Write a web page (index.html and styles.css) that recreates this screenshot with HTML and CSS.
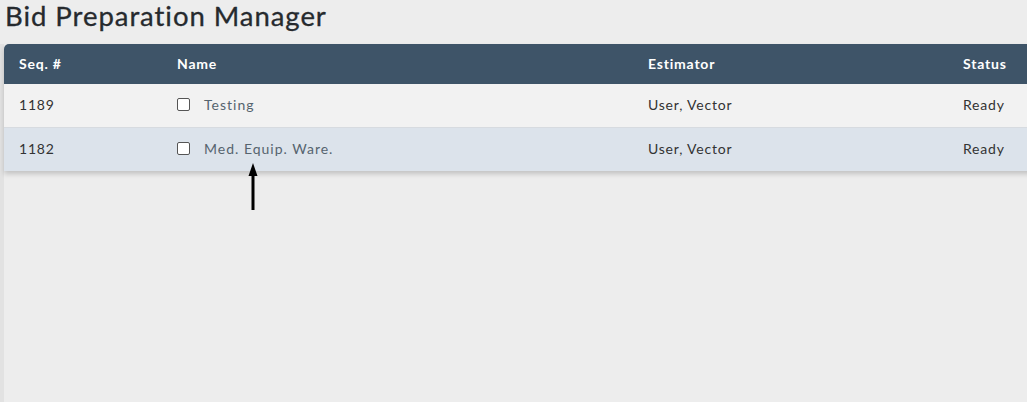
FILE: index.html
```html
<!DOCTYPE html>
<html>
<head>
<meta charset="utf-8">
<link rel="stylesheet" href="styles.css">
</head>
<body>
<h1 class="title">Bid Preparation Manager</h1>
<div class="main">
  <div class="panel">
    <div class="row head">
      <div class="c seq">Seq. #</div>
      <div class="c name">Name</div>
      <div class="c est">Estimator</div>
      <div class="c status">Status</div>
    </div>
    <div class="row r1">
      <div class="c seq">1189</div>
      <div class="c name"><span class="cb"></span><span class="nm">Testing</span></div>
      <div class="c est">User, Vector</div>
      <div class="c status">Ready</div>
    </div>
    <div class="row r2">
      <div class="c seq">1182</div>
      <div class="c name"><span class="cb"></span><span class="nm">Med. Equip. Ware.</span></div>
      <div class="c est">User, Vector</div>
      <div class="c status">Ready</div>
    </div>
  </div>
  <svg class="arrow" width="10" height="48" viewBox="0 0 10 48"><path d="M5 0 L9.5 13 L6.5 13 L6.5 47 L3.5 47 L3.5 13 L0.5 13 Z" fill="#000"/></svg>
</div>
</body>
</html>
```
FILE: styles.css
```css
html, body { margin: 0; padding: 0; }
body {
  background: #ededed;
  font-family: Lato, "Noto Sans", sans-serif;
  width: 1027px;
  height: 402px;
  overflow: hidden;
}
.title {
  margin: 0;
  padding: 1px 0 0 5px;
  height: 42px;
  box-sizing: border-box;
  font-size: 27.5px;
  font-weight: 400;
  color: #262a2e;
  letter-spacing: 0.95px;
  line-height: 30px;
  -webkit-text-stroke: 0.3px #262a2e;
}
.main {
  position: relative;
  border-left: 4px solid #e2e2e2;
  height: 360px;
  margin-top: 2px;
}
.panel {
  width: 1040px;
  border-radius: 5px 5px 0 0;
  overflow: hidden;
  box-shadow: 0 3px 5px rgba(0,0,0,0.18);
}
.row {
  display: flex;
  align-items: center;
  font-size: 14px;
  letter-spacing: 0.8px;
  color: #333;
}
.head {
  background: #3e5468;
  color: #fff;
  font-weight: 700;
  height: 40px;
  padding-bottom: 1px;
  box-sizing: border-box;
}
.r1 { background: #f2f2f2; height: 40px; border-bottom: 1px solid #d7dbe0; padding-bottom: 3px; box-sizing: content-box; }
.r2 { background: #dce3eb; height: 43px; padding-bottom: 3px; box-sizing: border-box; }
.c { box-sizing: border-box; }
.seq { width: 173px; padding-left: 15px; }
.name { width: 471px; display: flex; align-items: center; }
.est { width: 315px; }
.status { flex: 1; }
.cb {
  width: 11px; height: 11px;
  border: 1px solid #555;
  border-radius: 2px;
  background: #fff;
  margin-right: 14px;
}
.nm { color: #56646f; letter-spacing: 1px; }
.arrow {
  position: absolute;
  left: 244px;
  top: 119px;
}
```
